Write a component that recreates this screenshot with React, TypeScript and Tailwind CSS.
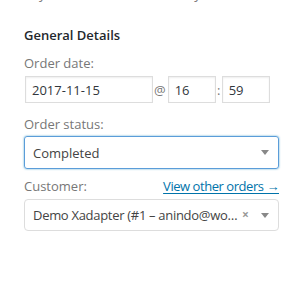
import React from "react";

function Arrow() {
  return (
    <span className="ml-auto h-0 w-0 border-x-[4px] border-t-[5px] border-x-transparent border-t-[#888]" aria-hidden="true" />
  );
}

export default function App() {
  return (
    <div className="h-[292px] w-[294px] overflow-hidden bg-white pl-[24px] pr-[15px] text-[13px] leading-[20px] text-[#777]" style={{ fontFamily: '"Open Sans", "Noto Sans", sans-serif' }}>
      <p className="-mt-[16px] whitespace-nowrap">Payment via Cash on delivery. Customer IP: 127.0.0.1</p>

      <h3 className="mt-[21px] font-semibold text-[#23282d]">General Details</h3>

      <p className="mt-[8px]">Order date:</p>
      <div className="mt-[3px] flex items-center">
        <input
          className="ml-px h-[27px] w-[128px] border border-[#ddd] px-[6px] text-[#32373c] shadow-[inset_0_1px_2px_rgba(0,0,0,0.07)] outline-none"
          defaultValue="2017-11-15"
        />
        <span className="ml-[1px] mr-[2px]">@</span>
        <input
          className="h-[27px] w-[48px] border border-[#ddd] px-[6px] text-[#32373c] shadow-[inset_0_1px_2px_rgba(0,0,0,0.07)] outline-none"
          defaultValue="16"
        />
        <span className="w-[6px] text-center">:</span>
        <input
          className="h-[27px] w-[48px] border border-[#ddd] px-[6px] text-[#32373c] shadow-[inset_0_1px_2px_rgba(0,0,0,0.07)] outline-none"
          defaultValue="59"
        />
      </div>

      <p className="mt-[11px]">Order status:</p>
      <div className="mt-[2px] flex h-[33px] items-center rounded-[3px] border border-[#5b9dd9] pl-[8px] pr-[9px] text-[#444] shadow-[0_0_2px_rgba(30,140,190,0.8)]">
        <span>Completed</span>
        <Arrow />
      </div>

      <div className="mt-[7px] flex items-center justify-between">
        <span>Customer:</span>
        <a href="#" className="tracking-[-0.45px] text-[#0073aa] underline underline-offset-[2px]">View other orders →</a>
      </div>
      <div className="mt-[3px] flex h-[32px] items-center rounded-[4px] border border-[#ddd] pl-[8px] pr-[9px] text-[#444]">
        <span className="w-[205px] truncate tracking-[-0.3px]">Demo Xadapter (#1 – anindo@wooforce.com)</span>
        <span className="ml-[4px] text-[12px] font-bold text-[#999]">×</span>
        <Arrow />
      </div>
    </div>
  );
}
